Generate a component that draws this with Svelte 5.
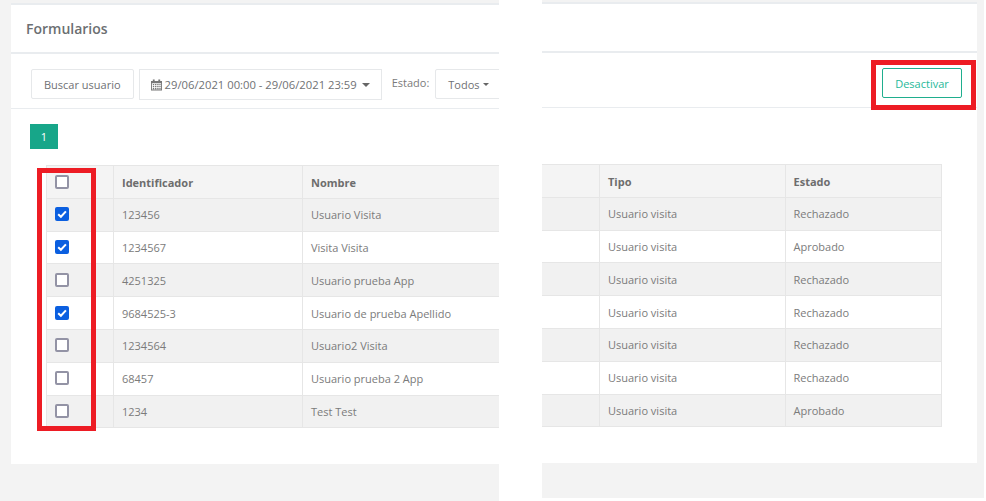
<script>
  const rows = [
    { id: '123456', name: 'Usuario Visita', estado: 'Rechazado', checked: true },
    { id: '1234567', name: 'Visita Visita', estado: 'Aprobado', checked: true },
    { id: '4251325', name: 'Usuario prueba App', estado: 'Rechazado', checked: false },
    { id: '9684525-3', name: 'Usuario de prueba Apellido', estado: 'Rechazado', checked: true },
    { id: '1234564', name: 'Usuario2 Visita', estado: 'Rechazado', checked: false },
    { id: '68457', name: 'Usuario prueba 2 App', estado: 'Rechazado', checked: false },
    { id: '1234', name: 'Test Test', estado: 'Aprobado', checked: false }
  ];
</script>

<main class="sheet">
  <section class="shot left">
    <div class="card">
      <header class="title"><h1>Formularios</h1></header>
      <div class="filters">
        <button class="btn">Buscar usuario</button>
        <button class="btn range">
          <svg class="cal" viewBox="0 0 12 12" width="11" height="12" aria-hidden="true">
            <path fill="#777" d="M2 0h2v1.5h4V0h2v1.5h2V12H0V1.5h2zM1 4v7h10V4zM2 5h1.500v1.300H2zm2.400 0h1.500v1.300H4.400zm2.400 0h1.500v1.300H6.800zm2.300 0h1.400v1.300H9.100zM2 7.200h1.500v1.300H2zm2.400 0h1.500v1.300H4.400zm2.400 0h1.500v1.300H6.800zm2.300 0h1.400v1.300H9.100zM2 9.400h1.500v1.200H2zm2.400 0h1.500v1.200H4.400zm2.400 0h1.500v1.200H6.800zm2.300 0h1.400v1.200H9.100z" />
          </svg>
          29/06/2021 00:00 - 29/06/2021 23:59
          <span class="caret big"></span>
        </button>
        <span class="label">Estado:</span>
        <button class="btn todos">Todos <span class="caret"></span></button>
      </div>
      <div class="pager"><span class="page">1</span></div>
      <div class="table-wrap">
        <table>
          <thead>
            <tr>
              <th class="check"><span class="box"></span></th>
              <th class="col-id">Identificador</th>
              <th class="col-name">Nombre</th>
              <th class="col-rest"></th>
            </tr>
          </thead>
          <tbody>
            {#each rows as row}
              <tr>
                <td class="check">
                  {#if row.checked}
                    <span class="box on">
                      <svg viewBox="0 0 14 14" width="14" height="14" aria-hidden="true"><path d="M3.200 7.200l2.700 2.600 5-5.400" fill="none" stroke="#fff" stroke-width="2" /></svg>
                    </span>
                  {:else}
                    <span class="box"></span>
                  {/if}
                </td>
                <td>{row.id}</td>
                <td>{row.name}</td>
                <td></td>
              </tr>
            {/each}
          </tbody>
        </table>
      </div>
    </div>
    <div class="mark mark-checks"></div>
  </section>

  <section class="shot right">
    <div class="card">
      <header class="title"></header>
      <div class="filters end">
        <button class="btn outline">Desactivar</button>
      </div>
      <div class="pager"></div>
      <div class="table-wrap">
        <table>
          <thead>
            <tr>
              <th class="col-cut"></th>
              <th class="col-tipo">Tipo</th>
              <th class="col-estado">Estado</th>
            </tr>
          </thead>
          <tbody>
            {#each rows as row}
              <tr>
                <td></td>
                <td class="tipo">Usuario visita</td>
                <td>{row.estado}</td>
              </tr>
            {/each}
          </tbody>
        </table>
      </div>
    </div>
    <div class="mark mark-action"></div>
  </section>
</main>

<style>
  :global(body) {
    background: #fff;
  }

  .sheet {
    display: flex;
    width: 986px;
    height: 501px;
    gap: 43px;
    overflow: hidden;
    font-family: "Open Sans", "Liberation Sans", sans-serif;
    font-size: 11px;
    color: #7b7b7b;
  }

  .shot {
    position: relative;
    background: #f3f3f3;
    overflow: hidden;
    box-sizing: border-box;
  }

  .left {
    width: 499px;
    height: 501px;
    padding: 3px 0 0 11px;
  }

  .right {
    width: 442px;
    height: 498px;
    padding: 2px 7px 0 0;
  }

  .card {
    background: #fff;
    height: 459px;
    border-top: 2px solid #e9ecef;
  }

  .left .card {
    width: 520px;
  }

  .title {
    height: 47px;
    padding-left: 15px;
    border-bottom: 2px solid #e9ecef;
    display: flex;
    align-items: center;
  }

  h1 {
    margin: 0;
    font-size: 14px;
    font-weight: 600;
    color: #6c6f72;
  }

  .filters {
    height: 55px;
    padding: 15px 0 0 20px;
    box-sizing: border-box;
    border-bottom: 1px solid #e9ecef;
    display: flex;
    align-items: flex-start;
  }

  .filters.end {
    justify-content: flex-end;
    padding: 15px 15px 0 0;
  }

  .btn {
    height: 30px;
    padding: 0 12px;
    border: 1px solid #e6e8ea;
    border-radius: 2px;
    background: #fff;
    font: inherit;
    color: #6f7174;
    display: flex;
    align-items: center;
    box-sizing: border-box;
  }

  .range {
    margin-left: 5px;
    height: 31px;
    padding: 0 11px;
    border-radius: 0;
    font-size: 11.25px;
  }

  .cal {
    margin-right: 3px;
  }

  .label {
    margin: 6px 6px 0 10px;
  }

  .todos {
    padding: 0 12px;
    white-space: pre;
  }

  .caret {
    display: inline-block;
    width: 0;
    height: 0;
    margin-left: 1px;
    border: 3px solid transparent;
    border-top-color: #666;
    border-bottom: 0;
  }

  .caret.big {
    margin-left: 5px;
    border-width: 4px 4px 0;
  }

  .outline {
    width: 80px;
    justify-content: center;
    padding: 0;
    border-color: #1fae8e;
    color: #26b99a;
  }

  .pager {
    height: 56px;
    padding: 15px 0 0 19px;
    box-sizing: border-box;
  }

  .page {
    display: flex;
    width: 28px;
    height: 25px;
    align-items: center;
    justify-content: center;
    background: #17a689;
    color: #fff;
  }

  .left .table-wrap {
    padding-left: 35px;
  }

  table {
    border-collapse: collapse;
    table-layout: fixed;
  }

  .left table {
    width: 460px;
  }

  .right table {
    width: 399px;
  }

  th,
  td {
    height: 32.800px;
    padding: 0 8px;
    box-sizing: border-box;
    border: 1px solid #e6e6e6;
    text-align: left;
  }

  th {
    padding-top: 2px;
    background: #f4f4f4;
    font-weight: 700;
    color: #6d6d6d;
  }

  tbody tr:nth-child(odd) td {
    background: #f1f1f1;
  }

  .check {
    width: 67px;
    padding: 0 0 0 8px;
    line-height: 0;
  }

  th.check {
    padding: 0 0 0 8px;
  }

  tbody .check {
    padding-bottom: 1px;
  }

  .col-id {
    width: 189px;
  }

  .col-name {
    width: 197px;
  }

  .col-cut {
    width: 57px;
  }

  .col-tipo,
  .tipo {
    width: 186px;
    padding-left: 8.500px;
  }

  .col-estado {
    width: 156px;
  }

  .right tr > :first-child {
    border-left: 0;
  }

  .box {
    display: inline-flex;
    width: 14px;
    height: 14px;
    box-sizing: border-box;
    border: 2px solid #9393a5;
    border-radius: 2px;
    background: #fff;
  }

  .box.on {
    border: 0;
    background: #0b5fe0;
  }

  /* red annotations drawn on top of the screenshots */
  .mark {
    position: absolute;
    box-sizing: border-box;
    border: 5px solid #ed1c24;
  }

  .mark-checks {
    left: 37px;
    top: 168px;
    width: 59px;
    height: 263px;
  }

  .mark-action {
    left: 329px;
    top: 60px;
    width: 105px;
    height: 50px;
  }
</style>
